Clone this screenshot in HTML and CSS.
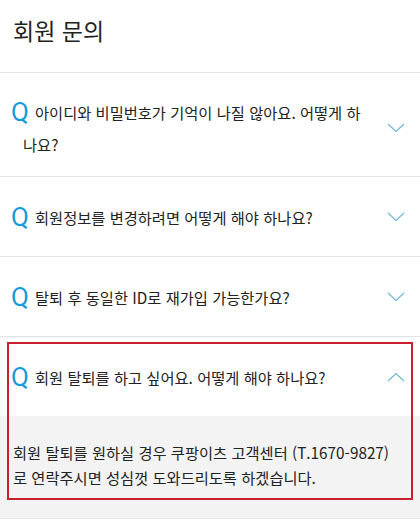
FILE: index.html
```html
<!DOCTYPE html>
<html lang="ko">
<head>
<meta charset="utf-8">
<link rel="stylesheet" href="styles.css">
</head>
<body>
<div class="page">
  <header class="title">회원 문의</header>
  <div class="item first">
    <div class="question">
      <p class="qtext"><span class="q">Q</span>아이디와 비밀번호가 기억이 나질 않아요. 어떻게 하나요?</p>
      <svg class="chev" viewBox="0 0 18 10"><path d="M1 1 L9 8.5 L17 1" /></svg>
    </div>
  </div>
  <div class="item">
    <div class="question">
      <p class="qtext"><span class="q">Q</span>회원정보를 변경하려면 어떻게 해야 하나요?</p>
      <svg class="chev" viewBox="0 0 18 10"><path d="M1 1 L9 8.5 L17 1" /></svg>
    </div>
  </div>
  <div class="item">
    <div class="question">
      <p class="qtext"><span class="q">Q</span>탈퇴 후 동일한 ID로 재가입 가능한가요?</p>
      <svg class="chev" viewBox="0 0 18 10"><path d="M1 1 L9 8.5 L17 1" /></svg>
    </div>
  </div>
  <div class="item open">
    <div class="question">
      <p class="qtext"><span class="q">Q</span>회원 탈퇴를 하고 싶어요. 어떻게 해야 하나요?</p>
      <svg class="chev" viewBox="0 0 18 10"><path d="M1 9 L9 1.5 L17 9" /></svg>
    </div>
    <div class="answer">
      <p>회원 탈퇴를 원하실 경우 쿠팡이츠 고객센터 (T.1670-9827)<br>로 연락주시면 성심껏 도와드리도록 하겠습니다.</p>
    </div>
    <div class="highlight"></div>
  </div>
</div>
</body>
</html>
```
FILE: styles.css
```css
html, body {
  margin: 0;
  padding: 0;
  background: #fff;
}
body {
  font-family: "Noto Sans CJK KR", "Roboto", sans-serif;
  color: #222;
}
.page {
  width: 420px;
}
.title {
  height: 73px;
  box-sizing: border-box;
  padding: 13px 0 0 13px;
  font-size: 23px;
  line-height: 34px;
  border-bottom: 1px solid #e4e4e4;
}
.item {
  position: relative;
  border-bottom: 1px solid #e4e4e4;
}
.question {
  display: flex;
  align-items: center;
  min-height: 79px;
  padding: 0 15px 0 11px;
  box-sizing: border-box;
}
.first .question {
  min-height: 103px;
  padding-top: 6px;
}
.qtext {
  flex: 1;
  margin: 0;
  font-size: 15.3px;
  line-height: 32px;
  padding: 0 20px 0 12px;
  text-indent: -12px;
}
.q {
  font-family: "Roboto", sans-serif;
  color: #1a9bd7;
  font-size: 26px;
  display: inline-block;
  text-indent: 0;
  width: 18px;
  margin-right: 6px;
  vertical-align: -2px;
  line-height: 20px;
}
.chev {
  width: 18px;
  height: 10px;
  flex: none;
}
.chev path {
  fill: none;
  stroke: #6fb6d8;
  stroke-width: 1.2;
}
.answer {
  background: #f3f3f3;
  padding: 24px 13px 28px;
}
.answer p {
  margin: 0;
  font-size: 15.3px;
  line-height: 25px;
}
.highlight {
  position: absolute;
  left: 7px;
  right: 7px;
  top: 5px;
  bottom: 18px;
  border: 2px solid #c9202e;
  pointer-events: none;
}
```
